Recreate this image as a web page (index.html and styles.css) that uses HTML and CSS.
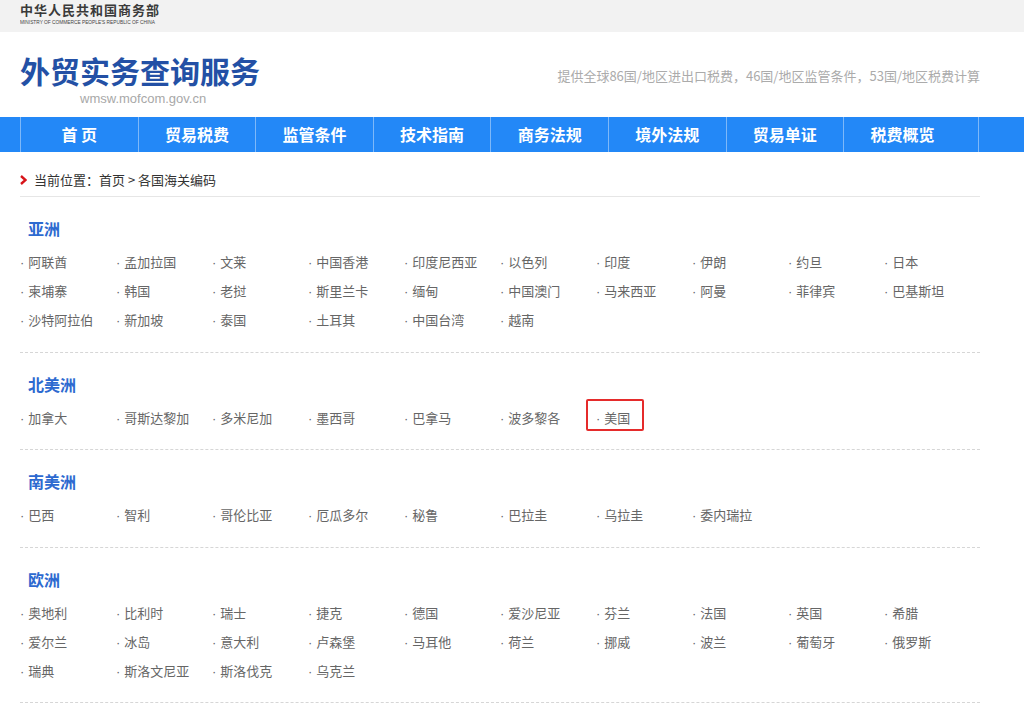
FILE: index.html
```html
<!DOCTYPE html>
<html lang="zh-CN">
<head>
<meta charset="utf-8">
<title>外贸实务查询服务 - 各国海关编码</title>
<link rel="stylesheet" href="styles.css">
</head>
<body>
<div class="topbar">
  <div class="wrap">
    <div class="logo">
      <div class="logo-cn">中华人民共和国商务部</div>
      <div class="logo-en">MINISTRY OF COMMERCE PEOPLE'S REPUBLIC OF CHINA</div>
    </div>
  </div>
</div>

<div class="header wrap">
  <div class="brand">
    <h1 class="brand-title">外贸实务查询服务</h1>
    <div class="brand-site">wmsw.mofcom.gov.cn</div>
  </div>
  <div class="slogan">提供全球86国/地区进出口税费，46国/地区监管条件，53国/地区税费计算</div>
</div>

<div class="nav">
  <ul class="wrap nav-list">
    <li class="nav-item">首 页</li>
    <li class="nav-item">贸易税费</li>
    <li class="nav-item">监管条件</li>
    <li class="nav-item">技术指南</li>
    <li class="nav-item">商务法规</li>
    <li class="nav-item">境外法规</li>
    <li class="nav-item">贸易单证</li>
    <li class="nav-item nav-last">税费概览</li>
  </ul>
</div>

<div class="wrap main">
  <div class="crumb">
    <svg class="crumb-icon" width="7" height="10" viewBox="0 0 7 10"><path d="M1 1 L5.5 5 L1 9" fill="none" stroke="#d7141a" stroke-width="2.4"/></svg>
    <span>当前位置：首页 &gt; 各国海关编码</span>
  </div>

  <div class="region">
    <h2 class="region-title">亚洲</h2>
    <ul class="countries">
      <li>阿联酋</li><li>孟加拉国</li><li>文莱</li><li>中国香港</li><li>印度尼西亚</li><li>以色列</li><li>印度</li><li>伊朗</li><li>约旦</li><li>日本</li>
      <li>柬埔寨</li><li>韩国</li><li>老挝</li><li>斯里兰卡</li><li>缅甸</li><li>中国澳门</li><li>马来西亚</li><li>阿曼</li><li>菲律宾</li><li>巴基斯坦</li>
      <li>沙特阿拉伯</li><li>新加坡</li><li>泰国</li><li>土耳其</li><li>中国台湾</li><li>越南</li>
    </ul>
  </div>

  <div class="region">
    <h2 class="region-title">北美洲</h2>
    <ul class="countries">
      <li>加拿大</li><li>哥斯达黎加</li><li>多米尼加</li><li>墨西哥</li><li>巴拿马</li><li>波多黎各</li><li class="marked">美国<span class="mark"></span></li>
    </ul>
  </div>

  <div class="region">
    <h2 class="region-title">南美洲</h2>
    <ul class="countries">
      <li>巴西</li><li>智利</li><li>哥伦比亚</li><li>厄瓜多尔</li><li>秘鲁</li><li>巴拉圭</li><li>乌拉圭</li><li>委内瑞拉</li>
    </ul>
  </div>

  <div class="region">
    <h2 class="region-title">欧洲</h2>
    <ul class="countries">
      <li>奥地利</li><li>比利时</li><li>瑞士</li><li>捷克</li><li>德国</li><li>爱沙尼亚</li><li>芬兰</li><li>法国</li><li>英国</li><li>希腊</li>
      <li>爱尔兰</li><li>冰岛</li><li>意大利</li><li>卢森堡</li><li>马耳他</li><li>荷兰</li><li>挪威</li><li>波兰</li><li>葡萄牙</li><li>俄罗斯</li>
      <li>瑞典</li><li>斯洛文尼亚</li><li>斯洛伐克</li><li>乌克兰</li>
    </ul>
  </div>
</div>
</body>
</html>
```

FILE: styles.css
```css
* { box-sizing: border-box; }
html, body { margin: 0; padding: 0; background: #fff; }
body {
  font-family: "Noto Sans CJK SC", "Noto Sans", sans-serif;
  color: #333;
  font-size: 13px;
}
ul { list-style: none; margin: 0; padding: 0; }
h1, h2 { margin: 0; }

.wrap { width: 960px; margin-left: 20px; }

/* top bar */
.topbar { background: #f2f2f2; height: 32px; }
.logo { padding-top: 2px; }
.logo-cn {
  font-size: 13px; line-height: 15px; font-weight: bold;
  letter-spacing: 1px; color: #3a3a3a;
}
.logo-en {
  font-family: "Liberation Sans", Arial, sans-serif;
  font-size: 6px; line-height: 7px; color: #444;
  transform: scale(0.8, 0.8); transform-origin: 0 50%;
  white-space: nowrap; margin-top: 2px; width: 180px;
}

/* header */
.header {
  height: 85px;
  display: flex;
  justify-content: space-between;
  align-items: flex-start;
  padding-top: 21px;
}
.brand-title {
  font-size: 30px; line-height: 34px; font-weight: bold;
  color: #2350a5; letter-spacing: 0;
}
.brand-site {
  font-family: "Liberation Sans", Arial, sans-serif;
  font-size: 13px; line-height: 16px; color: #a8a8a8;
  margin-left: 60px; margin-top: 4px;
}
.slogan {
  margin-top: 13px; line-height: 20px; font-size: 13px; color: #ababab;
}

/* nav */
.nav { background: #2388f7; height: 35px; }
.nav-list { display: flex; height: 35px; width: 959px; }
.nav-item {
  flex: 0 0 117.6px;
  border-left: 1px solid #7db8f9;
  text-align: center;
  color: #fff; font-size: 16px; font-weight: bold; line-height: 35px;
}
.nav-item.nav-last {
  flex: 1 1 auto;
  padding-right: 17px;
  border-right: 1px solid #7db8f9;
}

/* breadcrumb */
.crumb {
  display: flex; align-items: center;
  padding-top: 16px; padding-bottom: 4px;
  line-height: 24px; font-size: 13px; color: #333;
  border-bottom: 1px solid #e6e6e6;
}
.crumb-icon { margin-right: 7px; }

/* regions */
.region { padding: 13px 0 17.6px; border-bottom: 1px dashed #d6d6d6; }
.region-title {
  font-size: 16px; line-height: 36px; font-weight: bold;
  color: #2d6ad0; padding-left: 8px; margin-bottom: 1px;
}
.countries { display: flex; flex-wrap: wrap; }
.countries li {
  flex: 0 0 96px; height: 29px; line-height: 29px;
  color: #666; font-size: 13px; position: relative;
  white-space: nowrap;
}
.countries li::before {
  content: "·";
  font-family: "Liberation Sans", Arial, sans-serif;
  margin-right: 4px;
}
.mark {
  position: absolute; left: -10px; top: -4px;
  width: 58px; height: 32px;
  border: 2px solid #e52b2b; border-radius: 2px;
}
```
